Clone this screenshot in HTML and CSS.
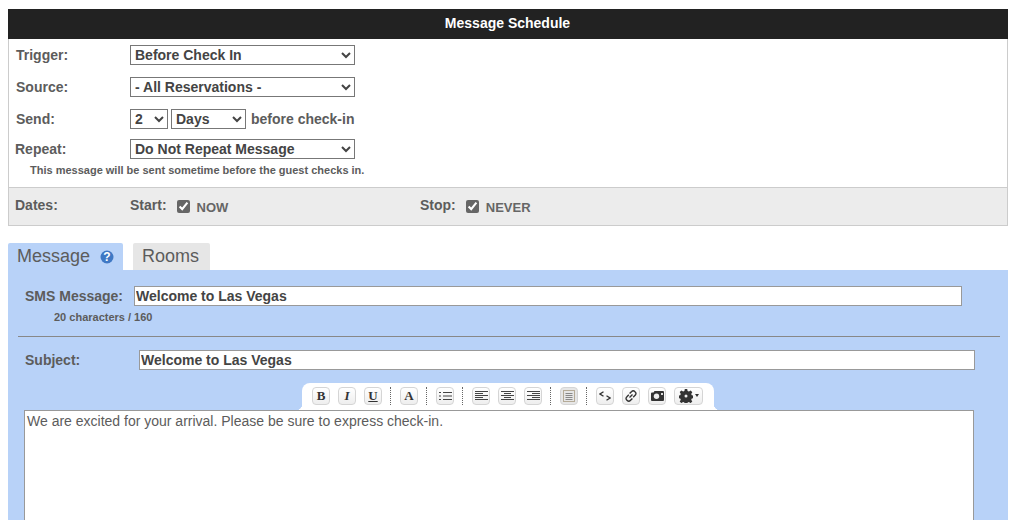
FILE: index.html
```html
<!DOCTYPE html>
<html lang="en">
<head>
    <meta charset="UTF-8">
    <meta name="viewport" content="width=device-width, initial-scale=1.0">
    <title>Message Schedule</title>
    <link rel="stylesheet" href="styles.css">
</head>
<body>
    <div class="container">
        <h1 class="title">Message Schedule</h1>

        <div class="schedule">
            <div class="row row-trigger">
                <label class="row-label">Trigger:</label>
                <select class="wide"><option>Before Check In</option></select>
            </div>
            <div class="row row-source">
                <label class="row-label">Source:</label>
                <select class="wide"><option>- All Reservations -</option></select>
            </div>
            <div class="row row-send">
                <label class="row-label">Send:</label>
                <select class="num"><option>2</option></select>
                <select class="unit"><option>Days</option></select>
                <span class="after">before check-in</span>
            </div>
            <div class="row row-repeat">
                <label class="row-label">Repeat:</label>
                <select class="wide"><option>Do Not Repeat Message</option></select>
            </div>
            <div class="note">This message will be sent sometime before the guest checks in.</div>
        </div>

        <div class="dates">
            <span class="dates-label">Dates:</span>
            <div class="date-item date-start">
                <span class="date-name">Start:</span>
                <input type="checkbox" class="check" checked>
                <span class="date-value">NOW</span>
            </div>
            <div class="date-item">
                <span class="date-name">Stop:</span>
                <input type="checkbox" class="check" checked>
                <span class="date-value">NEVER</span>
            </div>
        </div>

        <div class="tabs">
            <div class="tab active">Message
                <svg class="help" width="14" height="14" viewBox="0 0 14 14">
                    <circle cx="7" cy="7" r="6.500" fill="#3f78c4"/>
                    <text x="7" y="11" text-anchor="middle" class="help-mark">?</text>
                </svg>
            </div>
            <div class="tab tab-rooms">Rooms</div>
        </div>

        <div class="panel">
            <div class="sms-row">
                <label class="panel-label">SMS Message:</label>
                <input type="text" class="sms-input" value="Welcome to Las Vegas">
            </div>
            <div class="counter">20 characters / 160</div>
            <hr class="divider">
            <div class="subject-row">
                <label class="panel-label subject-label">Subject:</label>
                <input type="text" class="subject-input" value="Welcome to Las Vegas">
            </div>

            <div class="toolbar">
                <button type="button" class="tool tool-b">B</button>
                <button type="button" class="tool tool-i">I</button>
                <button type="button" class="tool tool-u">U</button>
                <span class="sep"></span>
                <button type="button" class="tool tool-a">A</button>
                <span class="sep"></span>
                <button type="button" class="tool">
                    <svg width="13" height="10" viewBox="0 0 13 10" stroke="#444" fill="none"><path d="M0 1.500h2M0 5h2M0 8.500h2M4 1.500h9M4 5h9M4 8.500h9"/></svg>
                </button>
                <span class="sep"></span>
                <button type="button" class="tool">
                    <svg width="13" height="10" viewBox="0 0 13 10" stroke="#444" fill="none"><path d="M0 .5h13M0 2.500h8M0 4.500h13M0 6.500h8M0 8.500h13"/></svg>
                </button>
                <button type="button" class="tool">
                    <svg width="13" height="10" viewBox="0 0 13 10" stroke="#444" fill="none"><path d="M0 .5h13M3 2.500h7M0 4.500h13M3 6.500h7M0 8.500h13"/></svg>
                </button>
                <button type="button" class="tool">
                    <svg width="13" height="10" viewBox="0 0 13 10" stroke="#444" fill="none"><path d="M0 .5h13M5 2.500h8M0 4.500h13M5 6.500h8M0 8.500h13"/></svg>
                </button>
                <span class="sep"></span>
                <button type="button" class="tool tool-on">
                    <svg width="12" height="12" viewBox="0 0 12 12" fill="none"><rect x=".5" y=".5" width="11" height="11" stroke="#b5ab98"/><path d="M2.500 3.500h7M2.500 5.500h7M2.500 7.500h7M2.500 9.500h7" stroke="#888"/></svg>
                </button>
                <span class="sep"></span>
                <button type="button" class="tool">
                    <svg width="12" height="10" viewBox="0 0 12 10" stroke="#333" fill="none" stroke-width="1.300"><path d="M4.500 .8L1 3l3.500 2.200M7.500 4.800L11 7 7.500 9.200"/></svg>
                </button>
                <button type="button" class="tool">
                    <svg width="12" height="12" viewBox="0 0 12 12" stroke="#333" fill="none" stroke-width="1.400"><path d="M4.600 3.600L6.700 1.500a2 2 0 0 1 3 0l.6.600a2 2 0 0 1 0 3L8.200 7.200M7.400 8.400L5.300 10.500a2 2 0 0 1-3 0l-.6-.6a2 2 0 0 1 0-3L3.800 4.800M4.500 7.500L7.500 4.500"/></svg>
                </button>
                <button type="button" class="tool">
                    <svg width="13" height="10" viewBox="0 0 13 10"><path d="M0 2.500a1 1 0 0 1 1-1h1.500L3.500 0h8.500a1 1 0 0 1 1 1v8a1 1 0 0 1-1 1H1a1 1 0 0 1-1-1z" fill="#333"/><circle cx="5.500" cy="5.300" r="2.700" fill="#eee"/><rect x="10" y="2" width="2" height="2" fill="#ddd"/></svg>
                </button>
                <button type="button" class="tool tool-gear">
                    <svg width="14" height="14" viewBox="0 0 14 14"><path fill="#333" d="M5.800 0h2.400l.4 2 1.300.6 1.800-1.100 1.600 1.700-1.100 1.700.6 1.300 2 .4v2.400l-2 .4-.6 1.300 1.100 1.800-1.700 1.600-1.700-1.100-1.300.6-.4 2H5.800l-.4-2-1.300-.6-1.800 1.100L.7 12.400l1.100-1.700-.6-1.300-2-.4V6.600l2-.4.6-1.300L.7 3.100l1.700-1.600 1.700 1.100 1.300-.6z"/><circle cx="7" cy="7" r="1.500" fill="#eee"/></svg>
                    <span class="caret"></span>
                </button>
            </div>

            <div class="editor">We are excited for your arrival. Please be sure to express check-in.</div>
        </div>
    </div>
</body>
</html>
```

FILE: styles.css
```css
/* Body styles */
html, body {
    height: 520px;
    overflow: hidden;
}

body {
    font-family: "Liberation Sans", Arial, sans-serif;
    margin: 0;
    padding: 9px 7px 0 8px;
    box-sizing: border-box;
    background-color: #fff;
    color: #5c5c5c;
}

/* Container styles */
.container {
    width: 1000px;
}

/* Heading styles */
.title {
    margin: 0;
    height: 30px;
    box-sizing: border-box;
    padding-right: 1px;
    line-height: 29px;
    background-color: #222;
    color: #fff;
    font-size: 14px;
    font-weight: bold;
    text-align: center;
}

/* Schedule form */
.schedule {
    height: 148px;
    box-sizing: border-box;
    border-left: 1px solid #ccc;
    border-right: 1px solid #ccc;
    padding-left: 7px;
}

.row {
    display: flex;
    align-items: center;
    height: 20px;
}

.row-trigger { padding-top: 6px; }
.row-source { padding-top: 12px; }
.row-send { padding-top: 12px; }
.row-repeat { padding-top: 10px; }

.row-label {
    width: 114px;
    font-size: 14px;
    font-weight: bold;
}

.row-repeat .row-label {
    margin-left: -1px;
    width: 115px;
}

select {
    height: 20px;
    box-sizing: border-box;
    border: 1px solid #777;
    border-radius: 0;
    background-color: #fff;
    color: #444;
    font-family: "Liberation Sans", Arial, sans-serif;
    font-size: 14px;
    font-weight: bold;
    padding: 0;
}

.wide { width: 225px; }
.num { width: 38px; }
.unit { width: 75px; margin-left: 3px; }

.after {
    margin-left: 5px;
    font-size: 14px;
    font-weight: bold;
}

.note {
    margin: 5px 0 0 14px;
    font-size: 11px;
    font-weight: bold;
}

/* Dates bar */
.dates {
    display: flex;
    height: 39px;
    box-sizing: border-box;
    padding: 9px 0 0 6px;
    background-color: #ececec;
    border: 1px solid #ccc;
}

.dates-label {
    width: 115px;
    font-size: 14px;
    font-weight: bold;
}

.date-item {
    display: flex;
    align-items: flex-start;
}

.date-start {
    width: 290px;
}

.date-name {
    font-size: 14px;
    font-weight: bold;
}

.check {
    width: 13px;
    height: 13px;
    margin: 3px 0 0 10px;
    accent-color: #666;
}

.date-value {
    margin: 3px 0 0 7px;
    font-size: 13px;
    font-weight: bold;
    color: #666;
}

/* Tabs */
.tabs {
    display: flex;
    gap: 10px;
    margin-top: 17px;
}

.tab {
    display: flex;
    align-items: center;
    gap: 10px;
    height: 27px;
    padding: 0 9px;
    border-radius: 2px 2px 0 0;
    background-color: #e6e6e6;
    font-size: 18px;
}

.tab-rooms {
    padding-right: 11px;
}

.tab.active {
    background-color: #b8d2f8;
}

.help-mark {
    fill: #fff;
    font-size: 12px;
    font-weight: bold;
}

/* Blue panel */
.panel {
    height: 250px;
    box-sizing: border-box;
    overflow: hidden;
    background-color: #b8d2f8;
    padding-top: 16px;
}

.sms-row,
.subject-row {
    display: flex;
    align-items: center;
    height: 20px;
}

.panel-label {
    margin-left: 17px;
    width: 109px;
    font-size: 14px;
    font-weight: bold;
}

.subject-label {
    width: 114px;
}

input[type="text"] {
    height: 20px;
    box-sizing: border-box;
    border: 1px solid #999;
    padding: 0 1px;
    background-color: #fff;
    color: #444;
    font-family: "Liberation Sans", Arial, sans-serif;
    font-size: 14px;
    font-weight: bold;
}

.sms-input { width: 828px; }
.subject-input { width: 836px; }

.counter {
    margin: 5px 0 0 46px;
    font-size: 11px;
    font-weight: bold;
}

.divider {
    margin: 13px 8px 13px 10px;
    border: 0;
    border-top: 1px solid #888;
}

/* Editor toolbar */
.toolbar {
    position: relative;
    display: flex;
    align-items: center;
    gap: 8px;
    width: 412px;
    height: 27px;
    box-sizing: border-box;
    margin: 13px 0 0 294px;
    padding: 0 0 2px 10px;
    background-color: #fff;
    border-radius: 8px 8px 0 0;
}

/* Flared bottom corners of the toolbar tab */
.toolbar::before,
.toolbar::after {
    content: "";
    position: absolute;
    bottom: 0;
    width: 6px;
    height: 6px;
}

.toolbar::before {
    left: -6px;
    background: radial-gradient(circle at 0 0, transparent 6px, #fff 6.500px);
}

.toolbar::after {
    right: -6px;
    background: radial-gradient(circle at 100% 0, transparent 6px, #fff 6.500px);
}

.tool {
    display: flex;
    align-items: center;
    justify-content: center;
    width: 18px;
    height: 18px;
    padding: 0;
    background: linear-gradient(#fff, #eee);
    border: 1px solid #d5d5d5;
    border-radius: 4px;
    color: #333;
    font-family: "Liberation Serif", serif;
    font-size: 13px;
    font-weight: bold;
}

.tool-i { font-style: italic; }
.tool-u { text-decoration: underline; }
.tool-on { background: #e6e6e6; }

.tool-gear {
    width: 29px;
    gap: 2px;
}

.caret {
    border-left: 2.500px solid transparent;
    border-right: 2.500px solid transparent;
    border-top: 3px solid #333;
}

.sep {
    width: 1px;
    height: 18px;
    border-left: 1px dotted #666;
}

.editor {
    width: 950px;
    height: 200px;
    box-sizing: border-box;
    margin-left: 16px;
    padding: 2px;
    background-color: #fff;
    border: 1px solid #999;
    font-size: 14px;
    color: #5c5c5c;
}
```
